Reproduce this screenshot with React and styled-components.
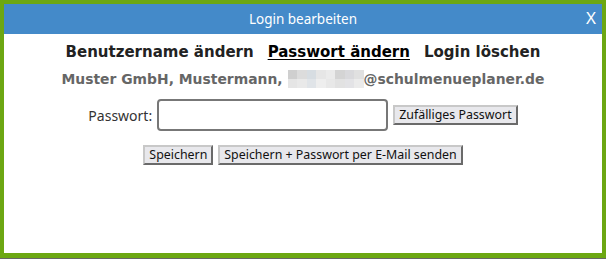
import React from "react";
import styled, { createGlobalStyle } from "styled-components";

const Global = createGlobalStyle`
  html, body { margin: 0; padding: 0; background: #ffffff; }
  body { width: 606px; height: 259px; overflow: hidden; }
`;

const Dialog = styled.div`
  box-sizing: border-box;
  width: 606px;
  height: 258px;
  border: 4px solid #6ca712;
  border-bottom-width: 5px;
  background: #fff;
  display: flex;
  flex-direction: column;
  box-shadow: 0 1px 0 #666;
`;

const TitleBar = styled.div`
  position: relative;
  height: 30px;
  background: #448ac9;
  color: #fff;
  display: flex;
  align-items: center;
  justify-content: center;
  font-family: "Noto Sans", "DejaVu Sans", sans-serif;
  font-size: 13.5px;
`;

const Close = styled.span`
  position: absolute;
  right: 6px;
  top: 4px;
  font-size: 17px;
  line-height: 20px;
`;

const Body = styled.div`
  display: flex;
  flex-direction: column;
  align-items: center;
  padding-top: 8px;
`;

const Tabs = styled.div`
  display: flex;
  gap: 14px;
  font-family: "DejaVu Sans", sans-serif;
  font-weight: bold;
  font-size: 15px;
  color: #222;
  line-height: 20px;
`;

const Tab = styled.span`
  color: ${(p) => (p.$active ? "#000" : "#222")};
  text-decoration: ${(p) => (p.$active ? "underline" : "none")};
  text-underline-offset: 2px;
`;

const Who = styled.div`
  margin-top: 8px;
  display: flex;
  align-items: center;
  font-family: "DejaVu Sans", sans-serif;
  font-weight: bold;
  font-size: 13.9px;
  color: #666;
  line-height: 18px;
`;

const Blur = styled.span`
  display: inline-grid;
  grid-template-columns: repeat(8, 9.5px);
  grid-template-rows: repeat(2, 9px);
  margin-left: 5px;
`;

const Px = styled.span`
  background: ${(p) => p.$c};
`;

const FormRow = styled.div`
  margin-top: 11px;
  display: flex;
  align-items: center;
  gap: 5px;
  font-family: "Noto Sans", "DejaVu Sans", sans-serif;
`;

const Label = styled.label`
  font-size: 14px;
  color: #333;
`;

const Input = styled.input`
  box-sizing: border-box;
  width: 231px;
  height: 32px;
  border: 2px solid #777;
  border-radius: 4px;
  outline: none;
`;

const Button = styled.button`
  box-sizing: border-box;
  height: 20px;
  padding: 0 4px;
  background: #e8e8ec;
  border: 2px solid;
  border-color: #c8c8c8 #6a6a6a #6a6a6a #c8c8c8;
  font-family: "Noto Sans", "DejaVu Sans", sans-serif;
  font-size: 12.4px;
  color: #111;
  line-height: 14px;
`;

const ButtonRow = styled.div`
  margin-top: 14px;
  display: flex;
  gap: 5px;
`;

const blurColors = [
  "#cfcfcf", "#dcdcdc", "#d7dde2", "#e6e6e6", "#ebebeb", "#d4d4d4", "#d9d9dc", "#e0e0e0",
  "#e5e5e5", "#e9e9e9", "#e0e4e8", "#eeeeee", "#e8e8e8", "#e2e2e2", "#e3e3e6", "#ebebeb",
];

export default function App() {
  return (
    <>
      <Global />
      <Dialog>
        <TitleBar>
          Login bearbeiten
          <Close>X</Close>
        </TitleBar>
        <Body>
          <Tabs>
            <Tab>Benutzername ändern</Tab>
            <Tab $active>Passwort ändern</Tab>
            <Tab>Login löschen</Tab>
          </Tabs>
          <Who>
            Muster GmbH, Mustermann,
            <Blur>
              {blurColors.map((c, i) => (
                <Px key={i} $c={c} />
              ))}
            </Blur>
            @schulmenueplaner.de
          </Who>
          <FormRow>
            <Label>Passwort:</Label>
            <Input type="password" />
            <Button>Zufälliges Passwort</Button>
          </FormRow>
          <ButtonRow>
            <Button>Speichern</Button>
            <Button>Speichern + Passwort per E-Mail senden</Button>
          </ButtonRow>
        </Body>
      </Dialog>
    </>
  );
}
